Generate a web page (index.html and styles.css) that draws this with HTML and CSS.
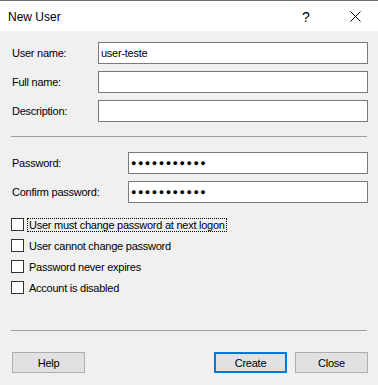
FILE: index.html
```html
<!DOCTYPE html>
<html lang="en">
  <head>
    <meta charset="UTF-8" />
    <meta name="viewport" content="width=device-width, initial-scale=1.0" />
    <title>New User</title>
    <link rel="stylesheet" href="styles.css">
  </head>
  <body>
    <div class="window">
      <div class="titlebar">
        <span class="title">New User</span>
        <span class="help-btn">?</span>
        <span class="close-btn">
          <svg width="11" height="11" viewBox="0 0 11 11">
            <path d="M0.5 0.5 L10.5 10.5 M10.5 0.5 L0.5 10.5" stroke="#000" stroke-width="1" fill="none" />
          </svg>
        </span>
      </div>

      <div class="content">
        <div class="group names">
          <div class="row">
            <label class="label">User name:</label>
            <input class="field" type="text" value="user-teste" />
          </div>
          <div class="row">
            <label class="label">Full name:</label>
            <input class="field" type="text" value="" />
          </div>
          <div class="row">
            <label class="label">Description:</label>
            <input class="field" type="text" value="" />
          </div>
        </div>

        <div class="separator"></div>

        <div class="group passwords">
          <div class="row">
            <label class="label">Password:</label>
            <input class="field secret" type="text" value="●●●●●●●●●●●" />
          </div>
          <div class="row">
            <label class="label">Confirm password:</label>
            <input class="field secret" type="text" value="●●●●●●●●●●●" />
          </div>
        </div>

        <div class="options">
          <div class="check">
            <span class="box"></span>
            <span class="check-text focused">User must change password at next logon</span>
          </div>
          <div class="check">
            <span class="box"></span>
            <span class="check-text">User cannot change password</span>
          </div>
          <div class="check">
            <span class="box"></span>
            <span class="check-text">Password never expires</span>
          </div>
          <div class="check">
            <span class="box"></span>
            <span class="check-text">Account is disabled</span>
          </div>
        </div>

        <div class="separator bottom"></div>

        <div class="buttons">
          <button class="btn">Help</button>
          <span class="spacer"></span>
          <button class="btn default">Create</button>
          <button class="btn">Close</button>
        </div>
      </div>
    </div>
  </body>
</html>
```

FILE: styles.css
```css
body {
  margin: 0;
  padding: 0;
  font-family: "Liberation Sans", Arial, sans-serif;
  font-size: 11px;
  letter-spacing: -0.25px;
  color: #000;
  background-color: #f0f0f0;
}

.window {
  width: 378px;
  height: 385px;
  border-top: 1px solid #6d6d6d;
  box-sizing: border-box;
  display: flex;
  flex-direction: column;
  overflow: hidden;
}

/* Title bar */
.titlebar {
  height: 30px;
  background-color: #ffffff;
  display: flex;
  align-items: center;
  padding-left: 8px;
}

.title {
  font-size: 12px;
  letter-spacing: 0;
  flex-grow: 1;
  padding-top: 1px;
}

.help-btn {
  font-size: 14px;
  width: 12px;
  margin-right: 36px;
  padding-top: 1px;
}

.close-btn {
  width: 11px;
  height: 11px;
  margin-right: 17px;
  display: flex;
}

/* Dialog body */
.content {
  flex-grow: 1;
  background-color: #f0f0f0;
  padding: 11px 10px 0 11px;
  display: flex;
  flex-direction: column;
}

.group {
  display: flex;
  flex-direction: column;
  gap: 7px;
}

.row {
  display: flex;
  align-items: center;
}

.label {
  padding-left: 1px;
}

.names .label {
  width: 86px;
}

.passwords .label {
  width: 116px;
}

.field {
  width: 240px;
  height: 22px;
  flex-grow: 1;
  box-sizing: border-box;
  border: 1px solid #7a7a7a;
  background-color: #ffffff;
  padding: 0 2px;
  margin: 0;
  font-family: "Liberation Sans", Arial, sans-serif;
  font-size: 11px;
  letter-spacing: -0.25px;
  color: #000;
  outline: none;
}

.field.secret {
  font-size: 9px;
  letter-spacing: 1.5px;
  padding-left: 2px;
}

.separator {
  height: 1px;
  background-color: #a0a0a0;
  margin: 14px 1px 15px 0;
}

/* Checkboxes */
.options {
  margin-top: 11px;
  display: flex;
  flex-direction: column;
}

.check {
  height: 21px;
  display: flex;
  align-items: center;
  gap: 3px;
}

.box {
  width: 13px;
  height: 13px;
  box-sizing: border-box;
  border: 1px solid #333333;
  background-color: #ffffff;
}

.check-text {
  padding: 0 1px;
  border: 1px solid transparent;
  line-height: 12px;
}

.check-text.focused {
  border: 1px dotted #000;
}

.separator.bottom {
  margin-top: auto;
  margin-bottom: 21px;
}

/* Buttons */
.buttons {
  display: flex;
  gap: 8px;
  padding-left: 1px;
  margin-bottom: 12px;
}

.spacer {
  flex-grow: 1;
}

.btn {
  width: 73px;
  height: 21px;
  box-sizing: border-box;
  border: 1px solid #adadad;
  background-color: #e1e1e1;
  font-family: "Liberation Sans", Arial, sans-serif;
  font-size: 11px;
  letter-spacing: -0.25px;
  color: #000;
  padding: 0;
  margin: 0;
}

.btn.default {
  border: 2px solid #0078d7;
}
```
